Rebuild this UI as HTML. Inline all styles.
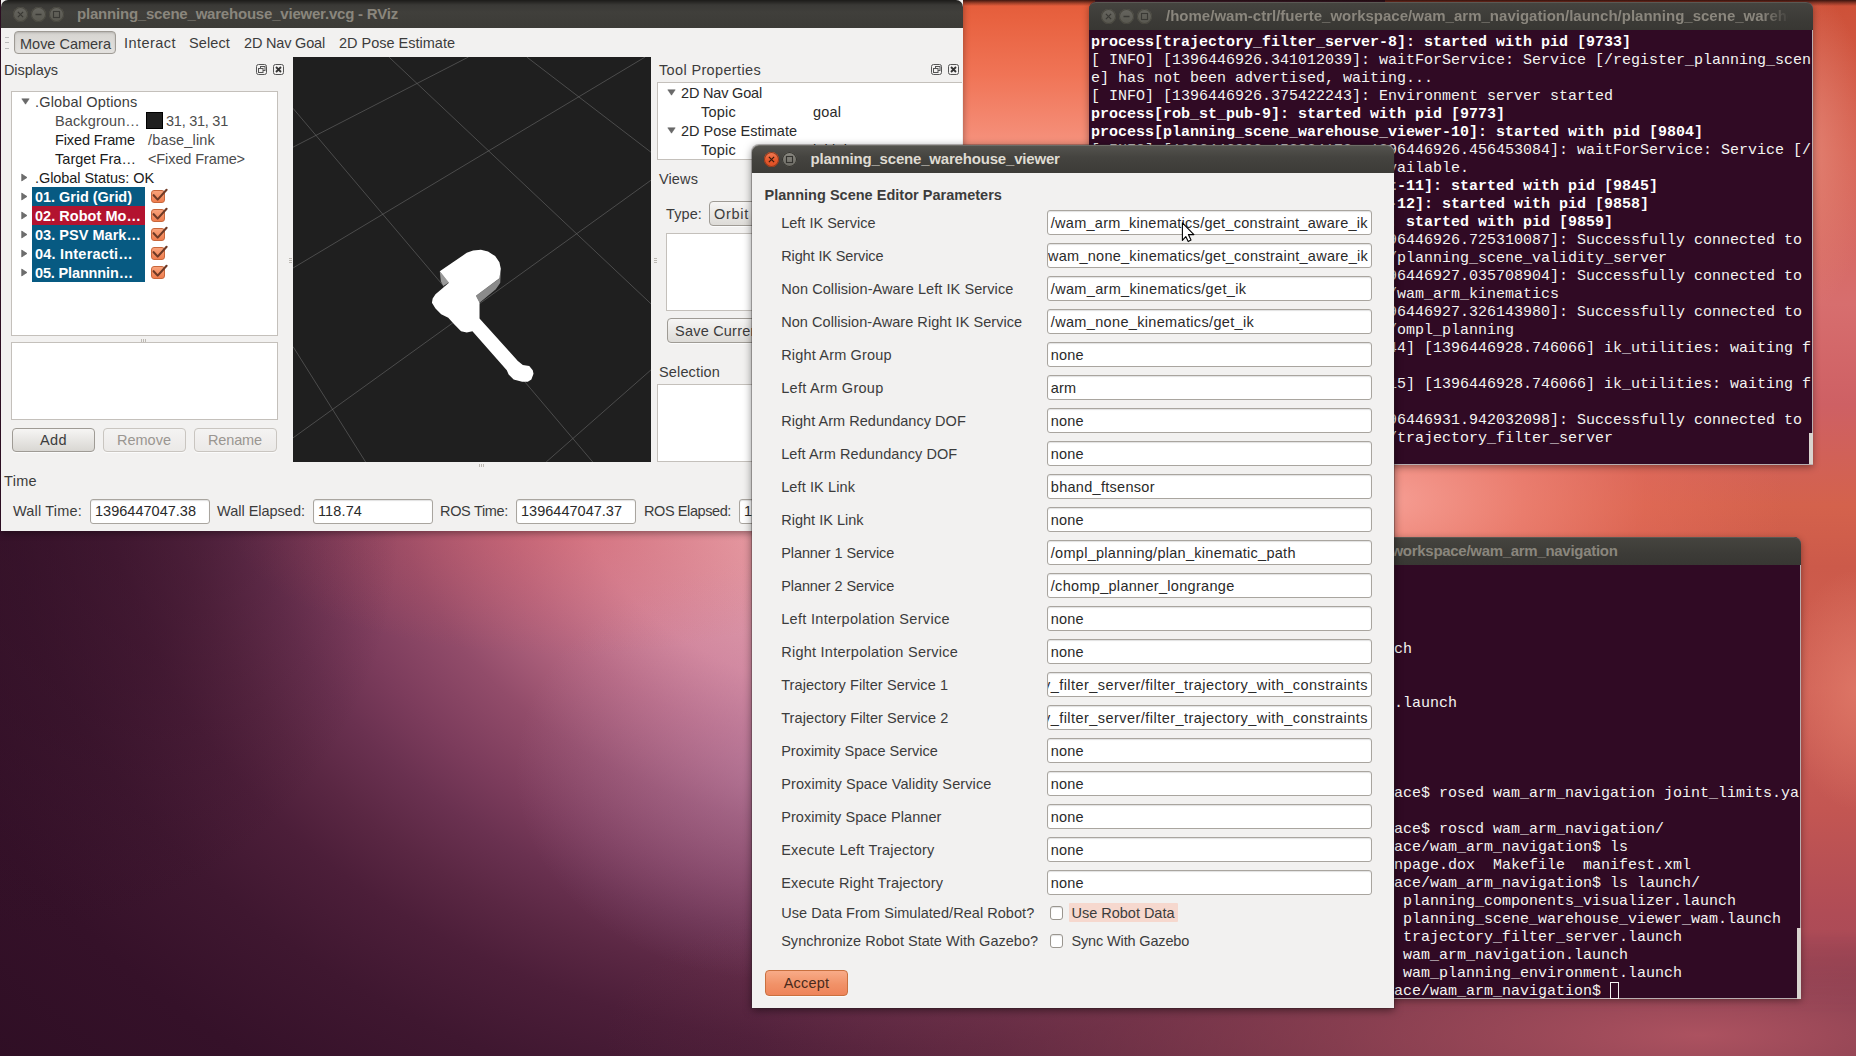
<!DOCTYPE html><html><head><meta charset="utf-8"><title>desktop</title><style>
*{box-sizing:border-box}
html,body{margin:0;padding:0}
body{width:1856px;height:1056px;overflow:hidden;position:relative;font-family:"Liberation Sans",sans-serif;font-size:15px;color:#3c3c3c;background:#4a1a3a}
.a{position:absolute}
.t{position:absolute;white-space:pre;line-height:20px;height:20px}
#wall{position:absolute;left:0;top:0;width:1856px;height:1056px;
 background:
  radial-gradient(ellipse 1100px 250px at 1700px 1035px, rgba(172,82,96,1) 0%, rgba(172,82,96,.72) 27%, rgba(172,82,96,.26) 64%, rgba(172,82,96,.05) 86%, rgba(172,82,96,0) 100%),
  radial-gradient(ellipse 400px 420px at 0px 520px, rgba(46,14,36,.55) 0%, rgba(46,14,36,.36) 50%, rgba(46,14,36,0) 100%),
  radial-gradient(ellipse 330px 130px at 560px 525px, rgba(215,85,85,.38) 0%, rgba(215,85,85,0) 100%),
  radial-gradient(ellipse 260px 210px at 775px 770px, rgba(200,155,195,.38) 0%, rgba(200,155,195,0) 100%),
  radial-gradient(ellipse 1380px 1040px at 900px 450px,
    rgb(238,178,182) 0%, rgb(230,162,172) 14%, rgb(212,134,154) 24%, rgb(182,104,130) 30%, rgb(146,76,106) 37%, rgb(124,60,92) 43%,
    rgb(106,49,80) 47.5%, rgb(90,39,67) 52.5%, rgb(76,30,57) 57.5%, rgb(63,23,48) 65%, rgb(53,17,41) 75%, rgb(46,14,36) 90%);
}
#wc{position:absolute;left:955px;top:0;width:140px;height:152px;
 background:linear-gradient(180deg, rgb(228,92,58) 0px, rgb(232,98,64) 20px, rgb(240,116,86) 75px, rgb(246,148,128) 150px)}
#wde{position:absolute;left:1385px;top:0;width:471px;height:1012px;
 -webkit-mask-image:linear-gradient(180deg,#000 930px,transparent 1012px);mask-image:linear-gradient(180deg,#000 930px,transparent 1012px);
 background:
  radial-gradient(ellipse 400px 220px at 0px 500px, rgba(246,158,148,1) 0%, rgba(240,132,118,.78) 35%, rgba(234,112,94,.45) 65%, rgba(225,100,85,0) 100%),
  radial-gradient(ellipse 60px 160px at 425px 150px, rgba(228,135,120,.8) 0%, rgba(228,135,120,0) 100%),
  radial-gradient(ellipse 70px 120px at 471px 690px, rgba(222,118,102,.9) 0%, rgba(222,118,102,0) 100%),
  linear-gradient(180deg, rgb(205,80,55) 0%, rgb(214,98,82) 15%, rgb(215,110,110) 30%, rgb(206,96,100) 40%, rgb(212,98,76) 50%, rgb(204,90,74) 56%, rgb(208,98,86) 68%, rgb(195,86,82) 80%, rgb(176,76,86) 90%, rgb(160,72,90) 100%);
}
#topsh{position:absolute;left:0;top:0;width:1856px;height:6px;background:linear-gradient(180deg,rgba(20,5,5,.8),rgba(20,5,5,.35) 50%,rgba(20,5,5,0))}
.win{position:absolute;background:#f2f1f0;}
.tb{position:absolute;left:0;top:0;right:0;border-radius:6px 6px 0 0;background:linear-gradient(#4d4c47,#3d3c38 85%,#3a3935);border-top:1px solid #64635d}
.term{position:absolute;background:#300a24;overflow:hidden}
.mono{position:absolute;white-space:pre;font-family:"Liberation Mono",monospace;font-size:15px;line-height:18px;height:18px;color:#f4f4f2}
.mono b{font-weight:700;color:#fff}
.box{position:absolute;background:#fff;border:1px solid #c4c0bb;}
.inp{position:absolute;background:#fff;border:1px solid #a9a59f;border-radius:3px;box-shadow:inset 0 1px 1px rgba(0,0,0,.12)}
.btn{position:absolute;border:1px solid #aaa59e;border-radius:4px;background:linear-gradient(#fafaf9,#e3e1de);box-shadow:0 1px 0 rgba(255,255,255,.7)}
.wb{position:absolute;width:16px;height:16px;border-radius:50%}
</style></head><body>
<div id="wall"></div><div id="wc"></div><div id="wde"></div><div id="topsh"></div>
<div class="win" style="left:1px;top:0;width:961.5px;height:530.7px;box-shadow:0 2px 7px rgba(0,0,0,.38)">
<div class="tb" style="height:28px;border-radius:7px 7px 0 0;background:linear-gradient(#1c1b19 0px,#3a3936 5px,#403f3b 12px,#3c3b37 28px);border-top:0"></div>
</div>
<div class="a" style="left:13px;top:7px;width:15px;height:15px;border-radius:50%;background:linear-gradient(#66655f,#58574f);box-shadow:inset 0 0 0 1px #48473f"><svg class="a" style="left:0;top:0" width="15" height="15" viewBox="0 0 15 15"><path d="M4.9 4.9L10.1 10.1M10.1 4.9L4.9 10.1" stroke="#3a3935" stroke-width="1.25"/></svg></div>
<div class="a" style="left:31px;top:7px;width:15px;height:15px;border-radius:50%;background:linear-gradient(#66655f,#58574f);box-shadow:inset 0 0 0 1px #48473f"><svg class="a" style="left:0;top:0" width="15" height="15" viewBox="0 0 15 15"><path d="M4.5 7.5H10.5" stroke="#3a3935" stroke-width="1.5"/></svg></div>
<div class="a" style="left:49px;top:7px;width:15px;height:15px;border-radius:50%;background:linear-gradient(#66655f,#58574f);box-shadow:inset 0 0 0 1px #48473f"><svg class="a" style="left:0;top:0" width="15" height="15" viewBox="0 0 15 15"><rect x="4.5" y="4.5" width="6" height="6" fill="none" stroke="#3a3935" stroke-width="1.1"/></svg></div>
<span class="t" style="left:77px;top:4.0px;font-size:15px;font-weight:700;color:#8a867d;letter-spacing:-0.205px;">planning_scene_warehouse_viewer.vcg - RViz</span>
<div class="a" style="left:5px;top:37px;width:4px;height:12px;border-top:1px solid #bbb;border-bottom:1px solid #bbb"><div style="margin-top:4px;border-top:1px solid #bbb"></div></div>
<div class="btn" style="left:14px;top:31px;width:102px;height:23px;background:linear-gradient(#d6d4d0,#e4e2df);border-color:#9f9b95;box-shadow:inset 0 1px 2px rgba(0,0,0,.15)"></div>
<span class="t" style="left:20px;top:33.6px;font-size:14.5px;color:#3c3c3c;letter-spacing:-0.006px;">Move Camera</span>
<span class="t" style="left:124px;top:32.7px;font-size:14.5px;color:#3c3c3c;letter-spacing:0.455px;">Interact</span>
<span class="t" style="left:189px;top:32.7px;font-size:14.5px;color:#3c3c3c;letter-spacing:0.115px;">Select</span>
<span class="t" style="left:244px;top:32.7px;font-size:14.5px;color:#3c3c3c;letter-spacing:-0.183px;">2D Nav Goal</span>
<span class="t" style="left:339px;top:32.7px;font-size:14.5px;color:#3c3c3c;letter-spacing:-0.004px;">2D Pose Estimate</span>
<span class="t" style="left:4px;top:60.0px;font-size:14.5px;color:#3c3c3c;letter-spacing:-0.100px;">Displays</span>
<svg class="a" style="left:256px;top:64px" width="28" height="12" viewBox="0 0 28 12"><rect x="0.5" y="0.5" width="10" height="10" rx="2" fill="#f2f1f0" stroke="#555" stroke-width="1"/><rect x="4.5" y="2.5" width="4.5" height="4" fill="none" stroke="#555" stroke-width="1"/><rect x="2.5" y="4.5" width="4.5" height="4" fill="#f2f1f0" stroke="#555" stroke-width="1"/><rect x="17.5" y="0.5" width="10" height="10" rx="2" fill="#f2f1f0" stroke="#555" stroke-width="1"/><path d="M20 3L25 8M25 3L20 8" stroke="#333" stroke-width="1.8"/></svg>
<div class="box" style="left:11px;top:91px;width:267px;height:245px"></div>
<svg class="a" style="left:21px;top:97.5px" width="9" height="7" viewBox="0 0 9 7"><path d="M0.8 0.8H8.2L4.5 6.2Z" fill="#6a6a6a" stroke="#585858" stroke-width="0.5"/></svg>
<span class="t" style="left:35px;top:91.5px;font-size:14.5px;color:#3c3c3c;letter-spacing:0.170px;">.Global Options</span>
<span class="t" style="left:55px;top:110.5px;font-size:14.5px;color:#4c4c4c;letter-spacing:0.117px;">Backgroun…</span>
<div class="a" style="left:146px;top:112px;width:17px;height:17px;background:#1f1f1f;border:1px solid #000"></div>
<span class="t" style="left:166px;top:110.5px;font-size:14.5px;color:#4c4c4c;letter-spacing:-0.250px;">31, 31, 31</span>
<span class="t" style="left:55px;top:129.5px;font-size:14.5px;color:#1a1a1a;letter-spacing:-0.126px;">Fixed Frame</span>
<span class="t" style="left:148px;top:129.5px;font-size:14.5px;color:#4c4c4c;letter-spacing:0.170px;">/base_link</span>
<span class="t" style="left:55px;top:148.5px;font-size:14.5px;color:#1a1a1a;letter-spacing:0.037px;">Target Fra…</span>
<span class="t" style="left:148px;top:148.5px;font-size:14.5px;color:#4c4c4c;letter-spacing:-0.102px;">&lt;Fixed Frame&gt;</span>
<svg class="a" style="left:21px;top:173.0px" width="7" height="9" viewBox="0 0 7 9"><path d="M0.7 1.0V8.0L6.0 4.5Z" fill="#6e6e6e" stroke="#5a5a5a" stroke-width="0.6" stroke-linejoin="round"/></svg>
<span class="t" style="left:35px;top:167.5px;font-size:14.5px;color:#1a1a1a;letter-spacing:-0.061px;">.Global Status: OK</span>
<div class="a" style="left:32px;top:187px;width:113px;height:95px;background:#075a82"></div>
<div class="a" style="left:32px;top:206px;width:113px;height:19px;background:#b3132f"></div>
<svg class="a" style="left:21px;top:192.0px" width="7" height="9" viewBox="0 0 7 9"><path d="M0.7 1.0V8.0L6.0 4.5Z" fill="#6e6e6e" stroke="#5a5a5a" stroke-width="0.6" stroke-linejoin="round"/></svg>
<span class="t" style="left:35px;top:186.5px;font-size:14.5px;font-weight:700;color:#fff;letter-spacing:-0.033px;">01. Grid (Grid)</span>
<div class="a" style="left:151px;top:190.0px;width:14px;height:12.5px;border:1px solid #c8673c;border-radius:3px;background:linear-gradient(#f9a27a,#ef7e4f)"></div><svg class="a" style="left:150px;top:187.0px;overflow:visible" width="20" height="18" viewBox="-1 -3 20 18"><path d="M2.6 5.2L6.7 9.6L15.6 -0.2" fill="none" stroke="#6e3a26" stroke-width="2.1" stroke-linecap="round" stroke-linejoin="round"/></svg>
<svg class="a" style="left:21px;top:211.0px" width="7" height="9" viewBox="0 0 7 9"><path d="M0.7 1.0V8.0L6.0 4.5Z" fill="#6e6e6e" stroke="#5a5a5a" stroke-width="0.6" stroke-linejoin="round"/></svg>
<span class="t" style="left:35px;top:205.5px;font-size:14.5px;font-weight:700;color:#fff;letter-spacing:0.036px;">02. Robot Mo…</span>
<div class="a" style="left:151px;top:209.0px;width:14px;height:12.5px;border:1px solid #c8673c;border-radius:3px;background:linear-gradient(#f9a27a,#ef7e4f)"></div><svg class="a" style="left:150px;top:206.0px;overflow:visible" width="20" height="18" viewBox="-1 -3 20 18"><path d="M2.6 5.2L6.7 9.6L15.6 -0.2" fill="none" stroke="#6e3a26" stroke-width="2.1" stroke-linecap="round" stroke-linejoin="round"/></svg>
<svg class="a" style="left:21px;top:230.0px" width="7" height="9" viewBox="0 0 7 9"><path d="M0.7 1.0V8.0L6.0 4.5Z" fill="#6e6e6e" stroke="#5a5a5a" stroke-width="0.6" stroke-linejoin="round"/></svg>
<span class="t" style="left:35px;top:224.5px;font-size:14.5px;font-weight:700;color:#fff;letter-spacing:0.032px;">03. PSV Mark…</span>
<div class="a" style="left:151px;top:228.0px;width:14px;height:12.5px;border:1px solid #c8673c;border-radius:3px;background:linear-gradient(#f9a27a,#ef7e4f)"></div><svg class="a" style="left:150px;top:225.0px;overflow:visible" width="20" height="18" viewBox="-1 -3 20 18"><path d="M2.6 5.2L6.7 9.6L15.6 -0.2" fill="none" stroke="#6e3a26" stroke-width="2.1" stroke-linecap="round" stroke-linejoin="round"/></svg>
<svg class="a" style="left:21px;top:249.0px" width="7" height="9" viewBox="0 0 7 9"><path d="M0.7 1.0V8.0L6.0 4.5Z" fill="#6e6e6e" stroke="#5a5a5a" stroke-width="0.6" stroke-linejoin="round"/></svg>
<span class="t" style="left:35px;top:243.5px;font-size:14.5px;font-weight:700;color:#fff;letter-spacing:0.208px;">04. Interacti…</span>
<div class="a" style="left:151px;top:247.0px;width:14px;height:12.5px;border:1px solid #c8673c;border-radius:3px;background:linear-gradient(#f9a27a,#ef7e4f)"></div><svg class="a" style="left:150px;top:244.0px;overflow:visible" width="20" height="18" viewBox="-1 -3 20 18"><path d="M2.6 5.2L6.7 9.6L15.6 -0.2" fill="none" stroke="#6e3a26" stroke-width="2.1" stroke-linecap="round" stroke-linejoin="round"/></svg>
<svg class="a" style="left:21px;top:268.0px" width="7" height="9" viewBox="0 0 7 9"><path d="M0.7 1.0V8.0L6.0 4.5Z" fill="#6e6e6e" stroke="#5a5a5a" stroke-width="0.6" stroke-linejoin="round"/></svg>
<span class="t" style="left:35px;top:262.5px;font-size:14.5px;font-weight:700;color:#fff;letter-spacing:-0.148px;">05. Plannnin…</span>
<div class="a" style="left:151px;top:266.0px;width:14px;height:12.5px;border:1px solid #c8673c;border-radius:3px;background:linear-gradient(#f9a27a,#ef7e4f)"></div><svg class="a" style="left:150px;top:263.0px;overflow:visible" width="20" height="18" viewBox="-1 -3 20 18"><path d="M2.6 5.2L6.7 9.6L15.6 -0.2" fill="none" stroke="#6e3a26" stroke-width="2.1" stroke-linecap="round" stroke-linejoin="round"/></svg>
<div class="box" style="left:11px;top:342px;width:267px;height:78px"></div>
<div class="btn" style="left:12px;top:428px;width:83px;height:24px;border-color:#9f9b95;background:linear-gradient(#f6f5f4,#d9d7d3)"></div>
<div class="btn" style="left:103px;top:428px;width:83px;height:24px;border-color:#c9c5c0;background:linear-gradient(#f4f3f2,#ebe9e7)"></div>
<div class="btn" style="left:194px;top:428px;width:83px;height:24px;border-color:#c9c5c0;background:linear-gradient(#f4f3f2,#ebe9e7)"></div>
<span class="t" style="left:40px;top:429.5px;font-size:14.5px;color:#3c3c3c;letter-spacing:0.396px;">Add</span>
<span class="t" style="left:117px;top:429.5px;font-size:14.5px;color:#9a9691;letter-spacing:0.000px;">Remove</span>
<span class="t" style="left:208px;top:429.5px;font-size:14.5px;color:#9a9691;letter-spacing:-0.135px;">Rename</span>
<div class="a" style="left:293px;top:57px;width:358px;height:405px;background:#1f1f1f;overflow:hidden"><svg width="358" height="405" viewBox="8 5 922 1042" preserveAspectRatio="none"><g stroke="#6c6c6c" stroke-width="1.5"><line x1="255" y1="5" x2="930" y2="640"/><line x1="8" y1="137" x2="780" y2="1047"/><line x1="610" y1="5" x2="930" y2="250"/><line x1="8" y1="750" x2="195" y2="1047"/><line x1="8" y1="237" x2="460" y2="5"/><line x1="8" y1="548" x2="915" y2="5"/><line x1="8" y1="985" x2="930" y2="322"/><line x1="660" y1="1047" x2="930" y2="810"/></g><polygon points="543.2,549.5 541.8,586.1 530.4,602.6 488.4,637.3 479.2,619.0 539.6,575.1" fill="#8a8a8a"/><polygon points="386.0,556.1 409.7,585.4 395.1,594.2 388.9,582.4" fill="#9a9a9a"/><polygon points="386.0,556.1 444.5,516.6 455.5,508.6 471.9,502.7 492.0,501.2 510.3,505.6 528.6,517.3 539.6,533.1 543.2,549.5 539.6,574.4 479.2,619.0 488.4,637.3 488.4,677.5 587.1,787.3 599.9,797.5 616.4,800.1 625.5,811.1 627.4,820.2 621.9,834.8 612.7,840.3 598.1,840.3 576.2,834.8 563.4,822.0 558.6,811.1 470.1,710.5 455.5,714.1 440.8,710.5 422.5,692.2 407.9,675.7 389.6,666.6 375.0,651.9 365.8,637.3 367.7,626.3 375.0,615.4 409.7,586.1" fill="#fff"/></svg></div>
<div class="a" style="left:141px;top:339px;width:5px;height:3px;background:repeating-linear-gradient(90deg,#bdb9b3 0 1px,transparent 1px 2px)"></div>
<div class="a" style="left:479px;top:464px;width:5px;height:3px;background:repeating-linear-gradient(90deg,#bdb9b3 0 1px,transparent 1px 2px)"></div>
<div class="a" style="left:289px;top:258px;width:3px;height:5px;background:repeating-linear-gradient(180deg,#bdb9b3 0 1px,transparent 1px 2px)"></div>
<div class="a" style="left:654px;top:258px;width:3px;height:5px;background:repeating-linear-gradient(180deg,#bdb9b3 0 1px,transparent 1px 2px)"></div>
<span class="t" style="left:659px;top:60.0px;font-size:14.5px;color:#3c3c3c;letter-spacing:0.352px;">Tool Properties</span>
<svg class="a" style="left:931px;top:64px" width="28" height="12" viewBox="0 0 28 12"><rect x="0.5" y="0.5" width="10" height="10" rx="2" fill="#f2f1f0" stroke="#555" stroke-width="1"/><rect x="4.5" y="2.5" width="4.5" height="4" fill="none" stroke="#555" stroke-width="1"/><rect x="2.5" y="4.5" width="4.5" height="4" fill="#f2f1f0" stroke="#555" stroke-width="1"/><rect x="17.5" y="0.5" width="10" height="10" rx="2" fill="#f2f1f0" stroke="#555" stroke-width="1"/><path d="M20 3L25 8M25 3L20 8" stroke="#333" stroke-width="1.8"/></svg>
<div class="box" style="left:657px;top:82px;width:305px;height:78px;border-right:0"></div>
<svg class="a" style="left:667px;top:88.5px" width="9" height="7" viewBox="0 0 9 7"><path d="M0.8 0.8H8.2L4.5 6.2Z" fill="#6a6a6a" stroke="#585858" stroke-width="0.5"/></svg>
<span class="t" style="left:681px;top:82.5px;font-size:14.5px;color:#2a2a2a;letter-spacing:-0.183px;">2D Nav Goal</span>
<span class="t" style="left:701px;top:101.5px;font-size:14.5px;color:#2a2a2a;letter-spacing:0.228px;">Topic</span>
<span class="t" style="left:813px;top:101.5px;font-size:14.5px;color:#2a2a2a;letter-spacing:0.145px;">goal</span>
<svg class="a" style="left:667px;top:126.5px" width="9" height="7" viewBox="0 0 9 7"><path d="M0.8 0.8H8.2L4.5 6.2Z" fill="#6a6a6a" stroke="#585858" stroke-width="0.5"/></svg>
<span class="t" style="left:681px;top:120.5px;font-size:14.5px;color:#2a2a2a;letter-spacing:-0.004px;">2D Pose Estimate</span>
<span class="t" style="left:701px;top:139.5px;font-size:14.5px;color:#2a2a2a;letter-spacing:0.228px;">Topic</span>
<span class="t" style="left:813px;top:139.5px;font-size:14.5px;color:#2a2a2a;letter-spacing:0.136px;">initialpose</span>
<span class="t" style="left:659px;top:169.0px;font-size:14.5px;color:#3c3c3c;letter-spacing:0.116px;">Views</span>
<span class="t" style="left:666px;top:203.5px;font-size:14.5px;color:#3c3c3c;letter-spacing:0.106px;">Type:</span>
<div class="btn" style="left:709px;top:201px;width:120px;height:25px;border-color:#9f9b95;background:linear-gradient(#f6f5f4,#dddbd7)"></div>
<span class="t" style="left:714px;top:203.5px;font-size:14.5px;color:#3c3c3c;letter-spacing:0.716px;">Orbit</span>
<div class="box" style="left:666px;top:233px;width:200px;height:78px"></div>
<div class="btn" style="left:667px;top:318px;width:130px;height:25px;border-color:#9f9b95;background:linear-gradient(#f6f5f4,#dddbd7)"></div>
<span class="t" style="left:675px;top:320.5px;font-size:14.5px;color:#3c3c3c;letter-spacing:0.214px;">Save Current</span>
<span class="t" style="left:659px;top:361.7px;font-size:14.5px;color:#3c3c3c;letter-spacing:0.149px;">Selection</span>
<div class="box" style="left:657px;top:384px;width:305px;height:78px;border-right:0"></div>
<span class="t" style="left:4px;top:471.0px;font-size:14.5px;color:#3c3c3c;letter-spacing:0.328px;">Time</span>
<span class="t" style="left:13px;top:501.0px;font-size:14.5px;color:#3c3c3c;letter-spacing:0.186px;">Wall Time:</span>
<div class="inp" style="left:90px;top:499px;width:120px;height:25px"></div>
<span class="t" style="left:95px;top:501.0px;font-size:14.5px;color:#2a2a2a;letter-spacing:0.014px;">1396447047.38</span>
<span class="t" style="left:217px;top:501.0px;font-size:14.5px;color:#3c3c3c;letter-spacing:-0.010px;">Wall Elapsed:</span>
<div class="inp" style="left:313px;top:499px;width:120px;height:25px"></div>
<span class="t" style="left:318px;top:501.0px;font-size:14.5px;color:#2a2a2a;letter-spacing:0.120px;">118.74</span>
<span class="t" style="left:440px;top:501.0px;font-size:14.5px;color:#3c3c3c;letter-spacing:-0.323px;">ROS Time:</span>
<div class="inp" style="left:516px;top:499px;width:120px;height:25px"></div>
<span class="t" style="left:521px;top:501.0px;font-size:14.5px;color:#2a2a2a;letter-spacing:0.014px;">1396447047.37</span>
<span class="t" style="left:644px;top:501.0px;font-size:14.5px;color:#3c3c3c;letter-spacing:-0.408px;">ROS Elapsed:</span>
<div class="inp" style="left:739px;top:499px;width:120px;height:25px"></div>
<span class="t" style="left:744px;top:501.0px;font-size:14.5px;color:#2a2a2a;letter-spacing:0.120px;">118.74</span>
<div class="a" style="left:1089px;top:2px;width:724px;height:463px;border-radius:7px 7px 0 0;background:#300a24;box-shadow:0 2px 7px rgba(0,0,0,.38),inset -1px -1px 0 #b9aeb0"></div>
<div class="tb" style="left:1089px;top:2px;width:724px;right:auto;height:28px;border-radius:7px 7px 0 0;background:linear-gradient(#45443f,#3c3b37 60%,#383733);border-top:1px solid #5a5954"></div>
<div class="a" style="left:1101px;top:9px;width:15px;height:15px;border-radius:50%;background:linear-gradient(#66655f,#58574f);box-shadow:inset 0 0 0 1px #48473f"><svg class="a" style="left:0;top:0" width="15" height="15" viewBox="0 0 15 15"><path d="M4.9 4.9L10.1 10.1M10.1 4.9L4.9 10.1" stroke="#3a3935" stroke-width="1.25"/></svg></div>
<div class="a" style="left:1119px;top:9px;width:15px;height:15px;border-radius:50%;background:linear-gradient(#66655f,#58574f);box-shadow:inset 0 0 0 1px #48473f"><svg class="a" style="left:0;top:0" width="15" height="15" viewBox="0 0 15 15"><path d="M4.5 7.5H10.5" stroke="#3a3935" stroke-width="1.5"/></svg></div>
<div class="a" style="left:1137px;top:9px;width:15px;height:15px;border-radius:50%;background:linear-gradient(#66655f,#58574f);box-shadow:inset 0 0 0 1px #48473f"><svg class="a" style="left:0;top:0" width="15" height="15" viewBox="0 0 15 15"><rect x="4.5" y="4.5" width="6" height="6" fill="none" stroke="#3a3935" stroke-width="1.1"/></svg></div>
<div class="a" style="left:1166px;top:6px;width:622px;height:22px;overflow:hidden;-webkit-mask-image:linear-gradient(90deg,#000 596px,transparent 624px);mask-image:linear-gradient(90deg,#000 596px,transparent 624px)"><span class="t" style="left:0px;top:0.0px;font-size:15px;font-weight:700;color:#8a867d;letter-spacing:0.000px;letter-spacing:0.01px">/home/wam-ctrl/fuerte_workspace/wam_arm_navigation/launch/planning_scene_warehouse_viewer_wam.launch</span></div>
<span class="mono" style="left:1091px;top:34px"><b>process[trajectory_filter_server-8]: started with pid [9733]</b></span>
<span class="mono" style="left:1091px;top:52px">[ INFO] [1396446926.341012039]: waitForService: Service [/register_planning_scen</span>
<span class="mono" style="left:1091px;top:70px">e] has not been advertised, waiting...</span>
<span class="mono" style="left:1091px;top:88px">[ INFO] [1396446926.375422243]: Environment server started</span>
<span class="mono" style="left:1091px;top:106px"><b>process[rob_st_pub-9]: started with pid [9773]</b></span>
<span class="mono" style="left:1091px;top:124px"><b>process[planning_scene_warehouse_viewer-10]: started with pid [9804]</b></span>
<span class="mono" style="left:1091px;top:142px">[ INFO] [1396446926.453824173, 1396446926.456453084]: waitForService: Service [/</span>
<span class="mono" style="left:1091px;top:160px">register_planning_scene] is now available.</span>
<span class="mono" style="left:1091px;top:178px"><b>process[wam_arm_kinematics_cnstrnt-11]: started with pid [9845]</b></span>
<span class="mono" style="left:1091px;top:196px"><b>process[trajectory_filter_server2-12]: started with pid [9858]</b></span>
<span class="mono" style="left:1091px;top:214px"><b>process[planning_scene_visual-13]: started with pid [9859]</b></span>
<span class="mono" style="left:1091px;top:232px">[ INFO] [1396446926.722810033, 1396446926.725310087]: Successfully connected to</span>
<span class="mono" style="left:1091px;top:250px">                                 /planning_scene_validity_server</span>
<span class="mono" style="left:1091px;top:268px">[ INFO] [1396446927.032710011, 1396446927.035708904]: Successfully connected to</span>
<span class="mono" style="left:1091px;top:286px">                                 /wam_arm_kinematics</span>
<span class="mono" style="left:1091px;top:304px">[ INFO] [1396446927.323110055, 1396446927.326143980]: Successfully connected to</span>
<span class="mono" style="left:1091px;top:322px">                                 /ompl_planning</span>
<span class="mono" style="left:1091px;top:340px">[ WARN] [1396446928.746066, 1443544] [1396446928.746066] ik_utilities: waiting f</span>
<span class="mono" style="left:1091px;top:376px">[ WARN] [1396446928.746066, 1443515] [1396446928.746066] ik_utilities: waiting f</span>
<span class="mono" style="left:1091px;top:412px">[ INFO] [1396446931.939110022, 1396446931.942032098]: Successfully connected to</span>
<span class="mono" style="left:1091px;top:430px">                                 /trajectory_filter_server</span>
<div class="a" style="left:1809px;top:433px;width:4px;height:31px;background:#d9d4cf"></div>
<div class="a" style="left:1077px;top:537px;width:724px;height:462px;border-radius:7px 7px 0 0;background:#300a24;box-shadow:0 2px 7px rgba(0,0,0,.38),inset -1px -1px 0 #b9aeb0"></div>
<div class="tb" style="left:1077px;top:537px;width:724px;right:auto;height:28px;border-radius:7px 7px 0 0;background:linear-gradient(#45443f,#3c3b37 60%,#383733);border-top:1px solid #5a5954"></div>
<span class="t" style="left:1391.5px;top:541.0px;font-size:15px;font-weight:700;color:#8a867d;letter-spacing:-0.295px;">workspace/wam_arm_navigation</span>
<span class="mono" style="left:1079px;top:641px">                                   ch</span>
<span class="mono" style="left:1079px;top:695px">                                   .launch</span>
<span class="mono" style="left:1079px;top:785px">                                   ace$ rosed wam_arm_navigation joint_limits.ya</span>
<span class="mono" style="left:1079px;top:821px">                                   ace$ roscd wam_arm_navigation/</span>
<span class="mono" style="left:1079px;top:839px">                                   ace/wam_arm_navigation$ ls</span>
<span class="mono" style="left:1079px;top:857px">                                   npage.dox  Makefile  manifest.xml</span>
<span class="mono" style="left:1079px;top:875px">                                   ace/wam_arm_navigation$ ls launch/</span>
<span class="mono" style="left:1079px;top:893px">                                    planning_components_visualizer.launch</span>
<span class="mono" style="left:1079px;top:911px">                                    planning_scene_warehouse_viewer_wam.launch</span>
<span class="mono" style="left:1079px;top:929px">                                    trajectory_filter_server.launch</span>
<span class="mono" style="left:1079px;top:947px">                                    wam_arm_navigation.launch</span>
<span class="mono" style="left:1079px;top:965px">                                    wam_planning_environment.launch</span>
<span class="mono" style="left:1079px;top:983px">                                   ace/wam_arm_navigation$ </span>
<div class="a" style="left:1610px;top:982px;width:9px;height:17px;border:1px solid #f4f4f2"></div>
<div class="a" style="left:1797px;top:928px;width:4px;height:71px;background:#d9d4cf"></div>
<div class="win" style="left:752px;top:145px;width:641.5px;height:862.5px;border-radius:7px 7px 0 0;box-shadow:0 2px 9px rgba(0,0,0,.5),0 0 0 1px rgba(60,50,50,.3)"><div class="tb" style="height:28px;border-radius:7px 7px 0 0;background:linear-gradient(#54534e,#454440 40%,#3c3b37);border-top:1px solid #6e6d67"></div></div>
<div class="a" style="left:764px;top:152px;width:15px;height:15px;border-radius:50%;background:linear-gradient(#f37d55,#e4582c 55%,#dd4f24);box-shadow:inset 0 0 0 1px #8e3a1e"><svg class="a" style="left:0;top:0" width="15" height="15" viewBox="0 0 15 15"><path d="M4.9 4.9L10.1 10.1M10.1 4.9L4.9 10.1" stroke="#3b1a0c" stroke-width="1.25"/></svg></div>
<div class="a" style="left:782px;top:152px;width:15px;height:15px;border-radius:50%;background:linear-gradient(#8b8982,#6b6a63);box-shadow:inset 0 0 0 1px #35342f"><svg class="a" style="left:0;top:0" width="15" height="15" viewBox="0 0 15 15"><rect x="4.5" y="4.5" width="6" height="6" fill="none" stroke="#33322e" stroke-width="1.1"/></svg></div>
<span class="t" style="left:810.5px;top:149.0px;font-size:15px;font-weight:700;color:#dfdbd2;letter-spacing:-0.191px;">planning_scene_warehouse_viewer</span>
<span class="t" style="left:764.5px;top:185.0px;font-size:14.5px;font-weight:700;color:#3c3c3c;letter-spacing:0.015px;">Planning Scene Editor Parameters</span>
<span class="t" style="left:781.2px;top:213.0px;font-size:14.5px;color:#3c3c3c;letter-spacing:0.000px;">Left IK Service</span>
<div class="inp" style="left:1047px;top:210px;width:325px;height:25px"></div>
<span class="t" style="left:1050.8px;top:213.0px;font-size:14.5px;color:#2a2a2a;letter-spacing:0.269px;">/wam_arm_kinematics/get_constraint_aware_ik</span>
<span class="t" style="left:781.2px;top:246.0px;font-size:14.5px;color:#3c3c3c;letter-spacing:-0.111px;">Right IK Service</span>
<div class="inp" style="left:1047px;top:243px;width:325px;height:25px"></div>
<div class="a" style="left:1048px;top:245px;width:322px;height:23px;overflow:hidden"><span class="t" style="left:0px;top:1.0px;font-size:14.5px;color:#2a2a2a;letter-spacing:0.263px;">wam_none_kinematics/get_constraint_aware_ik</span></div>
<span class="t" style="left:781.2px;top:279.0px;font-size:14.5px;color:#3c3c3c;letter-spacing:0.079px;">Non Collision-Aware Left IK Service</span>
<div class="inp" style="left:1047px;top:276px;width:325px;height:25px"></div>
<span class="t" style="left:1050.8px;top:279.0px;font-size:14.5px;color:#2a2a2a;letter-spacing:0.328px;">/wam_arm_kinematics/get_ik</span>
<span class="t" style="left:781.2px;top:312.0px;font-size:14.5px;color:#3c3c3c;letter-spacing:0.053px;">Non Collision-Aware Right IK Service</span>
<div class="inp" style="left:1047px;top:309px;width:325px;height:25px"></div>
<span class="t" style="left:1050.8px;top:312.0px;font-size:14.5px;color:#2a2a2a;letter-spacing:0.335px;">/wam_none_kinematics/get_ik</span>
<span class="t" style="left:781.2px;top:345.0px;font-size:14.5px;color:#3c3c3c;letter-spacing:0.173px;">Right Arm Group</span>
<div class="inp" style="left:1047px;top:342px;width:325px;height:25px"></div>
<span class="t" style="left:1050.8px;top:345.0px;font-size:14.5px;color:#2a2a2a;letter-spacing:0.184px;">none</span>
<span class="t" style="left:781.2px;top:378.0px;font-size:14.5px;color:#3c3c3c;letter-spacing:0.291px;">Left Arm Group</span>
<div class="inp" style="left:1047px;top:375px;width:325px;height:25px"></div>
<span class="t" style="left:1050.8px;top:378.0px;font-size:14.5px;color:#2a2a2a;letter-spacing:0.201px;">arm</span>
<span class="t" style="left:781.2px;top:411.0px;font-size:14.5px;color:#3c3c3c;letter-spacing:0.035px;">Right Arm Redundancy DOF</span>
<div class="inp" style="left:1047px;top:408px;width:325px;height:25px"></div>
<span class="t" style="left:1050.8px;top:411.0px;font-size:14.5px;color:#2a2a2a;letter-spacing:0.184px;">none</span>
<span class="t" style="left:781.2px;top:444.0px;font-size:14.5px;color:#3c3c3c;letter-spacing:0.088px;">Left Arm Redundancy DOF</span>
<div class="inp" style="left:1047px;top:441px;width:325px;height:25px"></div>
<span class="t" style="left:1050.8px;top:444.0px;font-size:14.5px;color:#2a2a2a;letter-spacing:0.184px;">none</span>
<span class="t" style="left:781.2px;top:477.0px;font-size:14.5px;color:#3c3c3c;letter-spacing:0.113px;">Left IK Link</span>
<div class="inp" style="left:1047px;top:474px;width:325px;height:25px"></div>
<span class="t" style="left:1050.8px;top:477.0px;font-size:14.5px;color:#2a2a2a;letter-spacing:0.291px;">bhand_ftsensor</span>
<span class="t" style="left:781.2px;top:510.0px;font-size:14.5px;color:#3c3c3c;letter-spacing:0.014px;">Right IK Link</span>
<div class="inp" style="left:1047px;top:507px;width:325px;height:25px"></div>
<span class="t" style="left:1050.8px;top:510.0px;font-size:14.5px;color:#2a2a2a;letter-spacing:0.184px;">none</span>
<span class="t" style="left:781.2px;top:543.0px;font-size:14.5px;color:#3c3c3c;letter-spacing:-0.085px;">Planner 1 Service</span>
<div class="inp" style="left:1047px;top:540px;width:325px;height:25px"></div>
<span class="t" style="left:1050.8px;top:543.0px;font-size:14.5px;color:#2a2a2a;letter-spacing:0.282px;">/ompl_planning/plan_kinematic_path</span>
<span class="t" style="left:781.2px;top:576.0px;font-size:14.5px;color:#3c3c3c;letter-spacing:-0.085px;">Planner 2 Service</span>
<div class="inp" style="left:1047px;top:573px;width:325px;height:25px"></div>
<span class="t" style="left:1050.8px;top:576.0px;font-size:14.5px;color:#2a2a2a;letter-spacing:0.299px;">/chomp_planner_longrange</span>
<span class="t" style="left:781.2px;top:609.0px;font-size:14.5px;color:#3c3c3c;letter-spacing:0.319px;">Left Interpolation Service</span>
<div class="inp" style="left:1047px;top:606px;width:325px;height:25px"></div>
<span class="t" style="left:1050.8px;top:609.0px;font-size:14.5px;color:#2a2a2a;letter-spacing:0.184px;">none</span>
<span class="t" style="left:781.2px;top:642.0px;font-size:14.5px;color:#3c3c3c;letter-spacing:0.253px;">Right Interpolation Service</span>
<div class="inp" style="left:1047px;top:639px;width:325px;height:25px"></div>
<span class="t" style="left:1050.8px;top:642.0px;font-size:14.5px;color:#2a2a2a;letter-spacing:0.184px;">none</span>
<span class="t" style="left:781.2px;top:675.0px;font-size:14.5px;color:#3c3c3c;letter-spacing:0.084px;">Trajectory Filter Service 1</span>
<div class="inp" style="left:1047px;top:672px;width:325px;height:25px"></div>
<div class="a" style="left:1048px;top:674px;width:322px;height:23px;overflow:hidden"><span class="t" style="left:0px;top:1.0px;font-size:14.5px;color:#2a2a2a;letter-spacing:0.457px;left:auto;right:2px">/trajectory_filter_server/filter_trajectory_with_constraints</span></div>
<span class="t" style="left:781.2px;top:708.0px;font-size:14.5px;color:#3c3c3c;letter-spacing:0.095px;">Trajectory Filter Service 2</span>
<div class="inp" style="left:1047px;top:705px;width:325px;height:25px"></div>
<div class="a" style="left:1048px;top:707px;width:322px;height:23px;overflow:hidden"><span class="t" style="left:0px;top:1.0px;font-size:14.5px;color:#2a2a2a;letter-spacing:0.457px;left:auto;right:2px">/trajectory_filter_server/filter_trajectory_with_constraints</span></div>
<span class="t" style="left:781.2px;top:741.0px;font-size:14.5px;color:#3c3c3c;letter-spacing:-0.024px;">Proximity Space Service</span>
<div class="inp" style="left:1047px;top:738px;width:325px;height:25px"></div>
<span class="t" style="left:1050.8px;top:741.0px;font-size:14.5px;color:#2a2a2a;letter-spacing:0.184px;">none</span>
<span class="t" style="left:781.2px;top:774.0px;font-size:14.5px;color:#3c3c3c;letter-spacing:0.108px;">Proximity Space Validity Service</span>
<div class="inp" style="left:1047px;top:771px;width:325px;height:25px"></div>
<span class="t" style="left:1050.8px;top:774.0px;font-size:14.5px;color:#2a2a2a;letter-spacing:0.184px;">none</span>
<span class="t" style="left:781.2px;top:807.0px;font-size:14.5px;color:#3c3c3c;letter-spacing:0.067px;">Proximity Space Planner</span>
<div class="inp" style="left:1047px;top:804px;width:325px;height:25px"></div>
<span class="t" style="left:1050.8px;top:807.0px;font-size:14.5px;color:#2a2a2a;letter-spacing:0.184px;">none</span>
<span class="t" style="left:781.2px;top:840.0px;font-size:14.5px;color:#3c3c3c;letter-spacing:0.222px;">Execute Left Trajectory</span>
<div class="inp" style="left:1047px;top:837px;width:325px;height:25px"></div>
<span class="t" style="left:1050.8px;top:840.0px;font-size:14.5px;color:#2a2a2a;letter-spacing:0.184px;">none</span>
<span class="t" style="left:781.2px;top:873.0px;font-size:14.5px;color:#3c3c3c;letter-spacing:0.164px;">Execute Right Trajectory</span>
<div class="inp" style="left:1047px;top:870px;width:325px;height:25px"></div>
<span class="t" style="left:1050.8px;top:873.0px;font-size:14.5px;color:#2a2a2a;letter-spacing:0.184px;">none</span>
<span class="t" style="left:781.2px;top:903.0px;font-size:14.5px;color:#3c3c3c;letter-spacing:0.047px;">Use Data From Simulated/Real Robot?</span>
<div class="a" style="left:1049.5px;top:906.3px;width:13.5px;height:13.5px;background:#fff;border:1px solid #9a968f;border-radius:3px;box-shadow:inset 0 1px 1px rgba(0,0,0,.12)"></div>
<div class="a" style="left:1069px;top:903.3px;width:109px;height:18.5px;background:#f6d8ce;border-radius:1px"></div>
<span class="t" style="left:1071.5px;top:903.0px;font-size:14.5px;color:#3c3c3c;letter-spacing:-0.012px;">Use Robot Data</span>
<span class="t" style="left:781.2px;top:931.0px;font-size:14.5px;color:#3c3c3c;letter-spacing:0.016px;">Synchronize Robot State With Gazebo?</span>
<div class="a" style="left:1049.5px;top:934.3px;width:13.5px;height:13.5px;background:#fff;border:1px solid #9a968f;border-radius:3px;box-shadow:inset 0 1px 1px rgba(0,0,0,.12)"></div>
<span class="t" style="left:1071.5px;top:931.0px;font-size:14.5px;color:#3c3c3c;letter-spacing:-0.149px;">Sync With Gazebo</span>
<div class="btn" style="left:765px;top:970px;width:83px;height:25.5px;border-color:#c9703f;background:linear-gradient(#f8ab88,#f19268 55%,#ee845a)"></div>
<span class="t" style="left:783.7px;top:972.5px;font-size:14.5px;color:#4a2a1c;letter-spacing:0.226px;">Accept</span>
<svg class="a" style="left:1181px;top:221px" width="16" height="24" viewBox="-1 -1 16 24"><path d="M0.4 0.8V18.4L3.8 14.6L6.2 19.6L9 18.1L6.4 12.6H11.9Z" fill="#fff" stroke="#000" stroke-width="1.1" stroke-linejoin="round"/></svg>
</body></html>
